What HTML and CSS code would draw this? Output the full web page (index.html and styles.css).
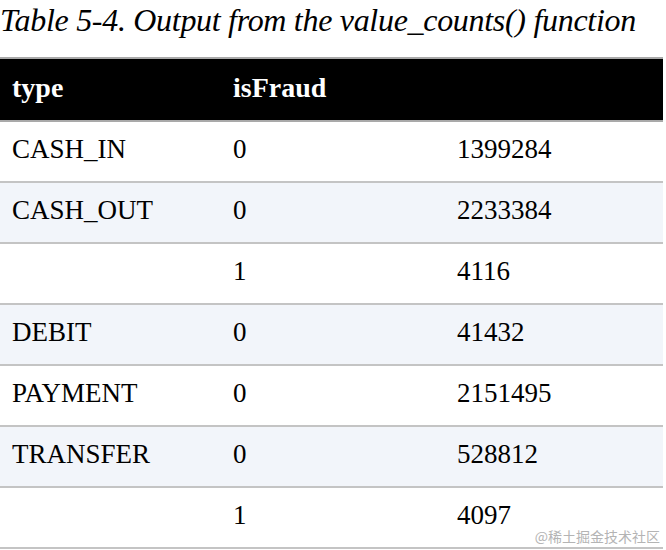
FILE: index.html
```html
<!DOCTYPE html>
<html lang="en">
<head>
<meta charset="utf-8">
<link rel="stylesheet" href="styles.css">
</head>
<body>
<div class="page">
  <div class="caption">Table 5-4. Output from the value_counts() function</div>
  <div class="table">
    <div class="row head"><div class="cell">type</div><div class="cell">isFraud</div><div class="cell"></div></div>
    <div class="row"><div class="cell">CASH_IN</div><div class="cell">0</div><div class="cell">1399284</div></div>
    <div class="row alt"><div class="cell">CASH_OUT</div><div class="cell">0</div><div class="cell">2233384</div></div>
    <div class="row"><div class="cell"></div><div class="cell">1</div><div class="cell">4116</div></div>
    <div class="row alt"><div class="cell">DEBIT</div><div class="cell">0</div><div class="cell">41432</div></div>
    <div class="row"><div class="cell">PAYMENT</div><div class="cell">0</div><div class="cell">2151495</div></div>
    <div class="row alt"><div class="cell">TRANSFER</div><div class="cell">0</div><div class="cell">528812</div></div>
    <div class="row"><div class="cell"></div><div class="cell">1</div><div class="cell">4097</div></div>
  </div>
  <div class="watermark">@稀土掘金技术社区</div>
</div>
</body>
</html>
```

FILE: styles.css
```css
html, body {
  margin: 0;
  padding: 0;
  background: #ffffff;
}
.page {
  position: relative;
  width: 666px;
  height: 550px;
  overflow: hidden;
  font-family: "Liberation Serif", "Times New Roman", serif;
  color: #000;
}
.caption {
  height: 57px;
  box-sizing: border-box;
  padding-top: 1px;
  font-style: italic;
  font-size: 32px;
  line-height: 38px;
  letter-spacing: -0.3px;
  white-space: nowrap;
}
.table {
  width: 663px;
  border-top: 2px solid #a9a9a9;
}
.row {
  display: grid;
  grid-template-columns: 221px 224px 218px;
  height: 59px;
  border-bottom: 2px solid #c4c4c4;
  align-items: center;
  font-size: 27px;
}
.row.head {
  height: 61px;
  background: #000;
  color: #fff;
  font-weight: bold;
  font-size: 28px;
  border-bottom-color: #a9a9a9;
}
.row.alt {
  background: #f2f5fa;
}
.cell {
  padding-left: 12px;
  padding-bottom: 4px;
  white-space: nowrap;
}
.watermark {
  position: absolute;
  right: 6px;
  bottom: 5px;
  font-family: "Noto Sans CJK SC", sans-serif;
  font-size: 14px;
  line-height: 18px;
  color: #b4b4b4;
}
```
